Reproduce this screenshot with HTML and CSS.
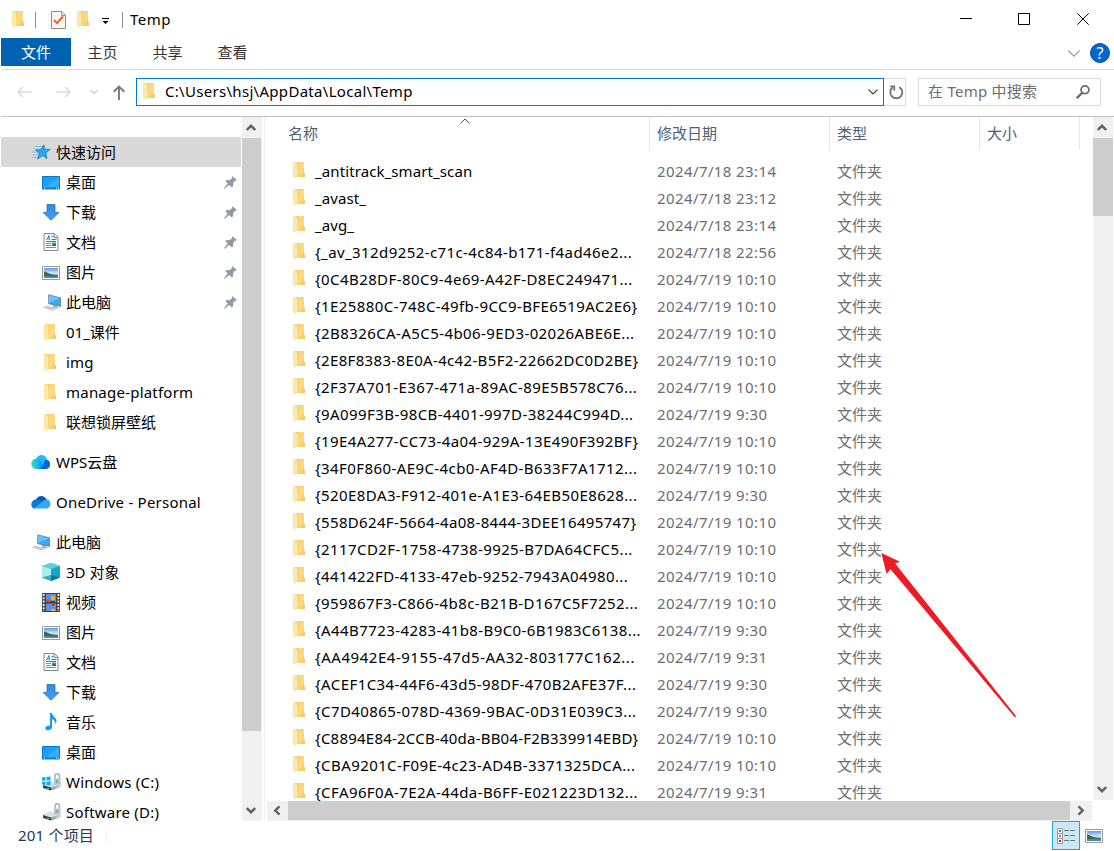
FILE: index.html
```html
<!DOCTYPE html>
<html lang="zh-CN">
<head>
  <meta charset="UTF-8">
  <meta name="viewport" content="width=device-width, initial-scale=1.0">
  <title>Temp</title>
  <link rel="stylesheet" href="styles.css">
</head>
<body>
  <!-- Shared icons -->
  <svg class="defs" width="0" height="0">
    <defs>
      <linearGradient id="gFolder" x1="0" y1="0" x2="1" y2="1"><stop offset="0" stop-color="#f3d074"/><stop offset=".6" stop-color="#fbdb82"/><stop offset="1" stop-color="#edc55c"/></linearGradient>
      <linearGradient id="gFlap" x1="0" y1="0" x2="1" y2="0"><stop offset="0" stop-color="#fde59d"/><stop offset="1" stop-color="#fdebb2"/></linearGradient>
      <linearGradient id="gSky" x1="0" y1="0" x2="0" y2="1"><stop offset="0" stop-color="#5b96e8"/><stop offset=".5" stop-color="#cfe6f8"/><stop offset="1" stop-color="#5d8a91"/></linearGradient>
      <linearGradient id="gBlue" x1="0" y1="0" x2="1" y2="1"><stop offset="0" stop-color="#1598f5"/><stop offset=".55" stop-color="#1ea5ff"/><stop offset=".56" stop-color="#42b2ff"/><stop offset="1" stop-color="#1ba0fb"/></linearGradient>
      <linearGradient id="gArrow" x1="0" y1="0" x2="0" y2="1"><stop offset="0" stop-color="#2f88dc"/><stop offset="1" stop-color="#45a3f0"/></linearGradient>
      <linearGradient id="gWps" x1="0" y1="0" x2="1" y2="0"><stop offset="0" stop-color="#35e0b5"/><stop offset=".5" stop-color="#16b4f4"/><stop offset="1" stop-color="#0c5be0"/></linearGradient>
      <linearGradient id="gDisk" x1="0" y1="0" x2="1" y2="0"><stop offset="0" stop-color="#8b9092"/><stop offset="1" stop-color="#d9dcdd"/></linearGradient>
    </defs>
    <symbol id="folder" viewBox="0 0 12 17">
      <path d="M1 0H11V11H12V15H3V2z" fill="url(#gFolder)"/>
      <path d="M0 0L4 2V14L3 17L0 15z" fill="url(#gFlap)"/>
    </symbol>
    <symbol id="star" viewBox="0 0 20 18">
      <path d="M4 3.500h7M2.500 6h5M1 9h7M2 11.800h5M1 14.500h6" stroke="#5fb4ea" stroke-width=".9" opacity=".8"/>
      <path d="M12.700 1.800l1.300 4.600 5.300-.1-4.600 3.800 1.300 5.500-4.500-2.900L6.600 16l1.700-5.700-3.500-3.200 5.200-.5z" fill="#2ba5f0" stroke="#1579c4" stroke-width=".8"/>
    </symbol>
    <symbol id="desktop" viewBox="0 0 18 14">
      <path d="M.5.5h17v12.500H.5z" fill="url(#gBlue)" stroke="#0b76c4"/>
      <path d="M1 11.500h16v1H1z" fill="#0870bd"/>
      <path d="M2 11.500h1v1H2zM14 11.500h1v1h-1zM16 11.500h1v1h-1z" fill="#fff"/>
    </symbol>
    <symbol id="download" viewBox="0 0 17 17">
      <path d="M4.500.5h8V8.500h4L8.500 16.200.7 8.500h3.800z" fill="url(#gArrow)" stroke="#2673bf" stroke-width=".8"/>
    </symbol>
    <symbol id="doc" viewBox="0 0 15 18">
      <path d="M.5.5h10.500L14.500 4v13.500H.5z" fill="#fcfdfd" stroke="#85898b"/>
      <path d="M10.500.5V4.500h4" fill="#e4e7e8" stroke="#85898b"/>
      <path d="M2.500 6.500h1L5.500 2.500v4h1M4 5h2M8 3.500h2M8 6.500h5M2.500 8.500h10" stroke="#1889d4" fill="none"/>
      <path d="M2.500 10.500h5M2.500 12.500h5M2.500 14.500h10" stroke="#7d9096"/>
      <path d="M8.500 9.500h4v3.500h-4z" fill="#3a95cc"/><path d="M9 12l2-1 1.500 1v1H9z" fill="#245f68"/>
    </symbol>
    <symbol id="picture" viewBox="0 0 18 14">
      <path d="M.5.5h17v13H.5z" fill="#fff" stroke="#9a9a9a"/>
      <path d="M2 2h14v10H2z" fill="url(#gSky)"/>
      <path d="M2 5.500c3 .5 5 2.500 9 3l5 .8v1.200H2z" fill="#3e6b50"/><path d="M2 10.500l14-.5v2H2z" fill="#4d87a5"/>
    </symbol>
    <symbol id="pc" viewBox="0 0 20 18">
      <path d="M10 10.500l5 2v1.500l2.500 1-3.500.8-5-1.500 2-.8z" fill="#acb7be"/>
      <path d="M6.200 1.200L19 4.500V14L6.200 11z" fill="#6d8aa0"/>
      <path d="M7 2.300l11 2.900v7.300L7 9.900z" fill="#37aaf5"/><path d="M7 2.300l11 2.900L7 9.900z" fill="#65c2ff"/>
      <path d="M0 14.300l4.500-1.800 10.500 3.300L10.500 18z" fill="#d3d9dd"/><path d="M2.500 14.200l8.500 2.600M4.500 13.300l8.500 2.700" stroke="#b5bdc2" stroke-width=".6"/>
    </symbol>
    <symbol id="wps" viewBox="0 0 20 16">
      <circle cx="10.500" cy="6.500" r="5.500" fill="#20baff"/>
      <path d="M5.500 4.500a5.200 5.200 0 0 0 0 10.500h9L8.500 6z" fill="url(#gWps)"/>
      <path d="M15 5.500a4.800 4.800 0 0 1 0 9.500H8.500c3 0 3.500-3 4.500-6.500.5-1.500 1-2.500 2-3z" fill="#0863e3"/>
    </symbol>
    <symbol id="onedrive" viewBox="0 0 21 14">
      <path d="M5 5C7-.5 14-1 16.500 4.500L12 9 4 5z" fill="#0a5bb0"/>
      <path d="M4.500 4.500c2.500-.8 4.500 0 6 1.200l4 2.800L3 13.800C-1 12.500-.5 5.500 4.500 4.500z" fill="#0d79d3"/>
      <path d="M11 7.500c2-3 5-3.500 6-3 4.500 1 4.500 8 0 9.300H3z" fill="#2eaaf0"/>
    </symbol>
    <symbol id="cube" viewBox="0 0 18 18">
      <path d="M9 0l9 3v11.500L9 18 0 14.500V3z" fill="#14a7cb"/>
      <path d="M9 0l9 3-9 3-9-3z" fill="#5ad0de"/><path d="M0 3l9 3v8L0 14.500z" fill="#b1ebeb"/>
      <path d="M0 14.500L9 12v6z" fill="#2bb3c6"/><path d="M9 12l9 2.500L9 18z" fill="#087a8c"/>
    </symbol>
    <symbol id="video" viewBox="0 0 18 19">
      <path d="M0 0h18v19H0z" fill="#424242"/>
      <path d="M1.700 1v17M16.300 1v17" stroke="#f5f5f5" stroke-width="1.700" stroke-dasharray="2 1.300"/>
      <path d="M4 1h10v8H4zM4 10.500h10V18H4z" fill="#5a91e6"/>
      <path d="M4 6l5 1v2H4z" fill="#d94b44"/><path d="M9 3h4v4H9z" fill="#e8b21c"/><path d="M8 8h5v2l-2 3-2-3z" fill="#26523c"/><path d="M10 10h3v2h-3z" fill="#d93025"/><path d="M9 16h4v2H9z" fill="#f2bd23"/>
    </symbol>
    <symbol id="music" viewBox="0 0 12 18">
      <path d="M5 0h2c0 3.500 5 4.500 4.500 8.500L10 11.500c.5-2.500-.5-4.500-3-5.500v8.500c-.5 3-6 4-6.800 1C0 13.500 3 12 5 12.500z" fill="#129cf5"/>
    </symbol>
    <symbol id="drive" viewBox="0 0 20 18">
      <path d="M1 12l7-4 11 3-7 5z" fill="#dde1e3"/>
      <path d="M1 12l8 2.500v3L1 15z" fill="#3b4340"/><path d="M9 14.500L19 11v3l-10 3.500z" fill="url(#gDisk)"/>
      <path d="M5 14.500l2 .6v1.200l-2-.6z" fill="#31df4b"/>
      <path d="M13 6V3c0-3 4.500-3 4.500 0v2" fill="none" stroke="#a2b2bc" stroke-width="1.500"/>
      <path d="M12 6l6.500-1v6L12 12z" fill="#b2c4cf"/><path d="M15 7v3" stroke="#738692"/>
    </symbol>
    <symbol id="windrive" viewBox="0 0 20 18">
      <use href="#drive" width="20" height="18"/>
      <path d="M0 4.500L3.500 4v3.500H0zM4.500 4L8.500 3.500v4h-4zM0 8.500h3.500V12L0 11.500zM4.500 8.500h4v4L4.500 12z" fill="#08b2ee"/>
    </symbol>
    <symbol id="pin" viewBox="0 0 13 13">
      <path d="M8.300.2l4.500 3.600-1.200 1.200-.9-.2-1.800 3 .3 2.300-1.300 1.300-2.700-2.400L.8 12.800 0 12.200l3.700-4.800L1.200 5.100l1.500-1.200 2.800.3 2.800-2.300-.6-.8z" fill="#8f9aa3"/>
    </symbol>
    <symbol id="chev" viewBox="0 0 10 7"><path d="M.8 6L5 1.800 9.200 6" fill="none" stroke="#606060" stroke-width="2.400"/></symbol>
  </svg>

  <div class="window">
    <header class="titlebar">
      <svg class="folder-lg"><use href="#folder"/></svg>
      <span class="bar"></span>
      <svg class="check" viewBox="0 0 15 18"><path d="M.5.5h10.500l3.500 3.500v13.500H.5z" fill="#f6f6f6" stroke="#8b8b8b"/><path d="M10.500.5V4.500h4" fill="#ddd" stroke="#999"/><path d="M3 9l3 3.200L12 5.500" fill="none" stroke="#f15a22" stroke-width="1.900"/></svg>
      <svg class="folder-lg second"><use href="#folder"/></svg>
      <svg class="qat" viewBox="0 0 7 6"><path d="M0 .5h7" stroke="#000"/><path d="M.5 3h6L3.500 6z" fill="#000"/></svg>
      <span class="bar bar2"></span>
      <span class="title">Temp</span>
      <div class="controls">
        <svg viewBox="0 0 12 12"><path d="M0 5.500h12" stroke="#000"/></svg>
        <svg viewBox="0 0 12 12"><path d="M.5.5h11v11H.5z" fill="none" stroke="#000"/></svg>
        <svg viewBox="0 0 12 12"><path d="M.3.3l11.400 11.400M11.700.3L.3 11.700" stroke="#000"/></svg>
      </div>
    </header>

    <nav class="ribbon">
      <a class="active">文件</a>
      <a>主页</a>
      <a>共享</a>
      <a>查看</a>
      <svg class="expand" viewBox="0 0 12 7"><path d="M.3.5L6 6.200 11.700.5" fill="none" stroke="#999" stroke-width="1.100"/></svg>
      <span class="help">?</span>
    </nav>

    <div class="navbar">
      <svg class="back" viewBox="0 0 15 12"><path d="M15 6H1M6 .8L1 6l5 5.200" fill="none" stroke="#dadada" stroke-width="1.500"/></svg>
      <svg class="forward" viewBox="0 0 15 12"><path d="M0 6h14M9 .8L14 6l-5 5.200" fill="none" stroke="#dadada" stroke-width="1.500"/></svg>
      <svg class="recent" viewBox="0 0 8 6"><path d="M.5 1L4 4.500 7.500 1" fill="none" stroke="#d0d0d0" stroke-width="1.500"/></svg>
      <svg class="up" viewBox="0 0 12 15"><path d="M6 15V1.500M.7 6.700L6 1.500l5.300 5.200" fill="none" stroke="#787878" stroke-width="1.900"/></svg>
      <div class="address">
        <svg class="folder"><use href="#folder"/></svg>
        <span>C:\Users\hsj\AppData\Local\Temp</span>
        <svg class="drop" viewBox="0 0 10 6"><path d="M.5.5L5 5 9.500.5" fill="none" stroke="#444" stroke-width="1.100"/></svg>
      </div>
      <div class="refresh"><svg viewBox="0 0 15 15"><path d="M10.300 2.100A6 6 0 1 1 4 2.300" fill="none" stroke="#777" stroke-width="1.900"/><path d="M1.200 1.300H5.300V5.800" fill="none" stroke="#777" stroke-width="1.700"/></svg></div>
      <div class="search">
        <span>在 Temp 中搜索</span>
        <svg viewBox="0 0 14 14"><circle cx="9" cy="4.800" r="3.900" fill="none" stroke="#6a6a6a" stroke-width="1.800"/><path d="M6.200 7.800L.8 13.200" stroke="#6a6a6a" stroke-width="2.300"/></svg>
      </div>
    </div>

    <main>
      <aside>
        <ul class="tree">
          <li class="root selected"><svg><use href="#star"/></svg>快速访问</li>
          <li><svg class="flat"><use href="#desktop"/></svg>桌面<svg class="pin"><use href="#pin"/></svg></li>
          <li><svg class="down"><use href="#download"/></svg>下载<svg class="pin"><use href="#pin"/></svg></li>
          <li><svg><use href="#doc"/></svg>文档<svg class="pin"><use href="#pin"/></svg></li>
          <li><svg class="flat"><use href="#picture"/></svg>图片<svg class="pin"><use href="#pin"/></svg></li>
          <li><svg class="wide"><use href="#pc"/></svg>此电脑<svg class="pin"><use href="#pin"/></svg></li>
          <li><svg class="folder"><use href="#folder"/></svg>01_课件</li>
          <li><svg class="folder"><use href="#folder"/></svg><span class="en">img</span></li>
          <li><svg class="folder"><use href="#folder"/></svg><span class="en">manage-platform</span></li>
          <li><svg class="folder"><use href="#folder"/></svg>联想锁屏壁纸</li>
          <li class="root"><svg class="cloud"><use href="#wps"/></svg>WPS云盘</li>
          <li class="root"><svg class="onedrive"><use href="#onedrive"/></svg><span class="en">OneDrive - Personal</span></li>
          <li class="root"><svg><use href="#pc"/></svg>此电脑</li>
          <li><svg><use href="#cube"/></svg>3D 对象</li>
          <li><svg class="film"><use href="#video"/></svg>视频</li>
          <li><svg class="flat"><use href="#picture"/></svg>图片</li>
          <li><svg><use href="#doc"/></svg>文档</li>
          <li><svg class="down"><use href="#download"/></svg>下载</li>
          <li><svg><use href="#music"/></svg>音乐</li>
          <li><svg class="flat"><use href="#desktop"/></svg>桌面</li>
          <li><svg class="wide"><use href="#windrive"/></svg><span class="en">Windows (C:)</span></li>
          <li><svg class="wide"><use href="#drive"/></svg><span class="en">Software (D:)</span></li>
        </ul>
        <div class="scroll vertical">
          <svg class="btn"><use href="#chev"/></svg>
          <div class="thumb"></div>
          <svg class="btn end"><use href="#chev"/></svg>
        </div>
      </aside>

      <section class="files">
        <div class="content">
          <div class="row head"><span>名称<svg class="sort" viewBox="0 0 10 6"><path d="M.5 5.500L5 1l4.500 4.500" fill="none" stroke="#555"/></svg></span><span>修改日期</span><span>类型</span><span>大小</span></div>
          <div class="list">
            <div class="row"><span><svg class="folder"><use href="#folder"/></svg><b class="plain">_antitrack_smart_scan</b></span><i>2024/7/18 23:14</i><em>文件夹</em></div>
            <div class="row"><span><svg class="folder"><use href="#folder"/></svg><b class="plain">_avast_</b></span><i>2024/7/18 23:12</i><em>文件夹</em></div>
            <div class="row"><span><svg class="folder"><use href="#folder"/></svg><b class="plain">_avg_</b></span><i>2024/7/18 23:14</i><em>文件夹</em></div>
            <div class="row"><span><svg class="folder"><use href="#folder"/></svg><b>{_av_312d9252-c71c-4c84-b171-f4ad46e2...</b></span><i>2024/7/18 22:56</i><em>文件夹</em></div>
            <div class="row"><span><svg class="folder"><use href="#folder"/></svg><b>{0C4B28DF-80C9-4e69-A42F-D8EC249471...</b></span><i>2024/7/19 10:10</i><em>文件夹</em></div>
            <div class="row"><span><svg class="folder"><use href="#folder"/></svg><b>{1E25880C-748C-49fb-9CC9-BFE6519AC2E6}</b></span><i>2024/7/19 10:10</i><em>文件夹</em></div>
            <div class="row"><span><svg class="folder"><use href="#folder"/></svg><b>{2B8326CA-A5C5-4b06-9ED3-02026ABE6E...</b></span><i>2024/7/19 10:10</i><em>文件夹</em></div>
            <div class="row"><span><svg class="folder"><use href="#folder"/></svg><b class="full">{2E8F8383-8E0A-4c42-B5F2-22662DC0D2BE}</b></span><i>2024/7/19 10:10</i><em>文件夹</em></div>
            <div class="row"><span><svg class="folder"><use href="#folder"/></svg><b>{2F37A701-E367-471a-89AC-89E5B578C76...</b></span><i>2024/7/19 10:10</i><em>文件夹</em></div>
            <div class="row"><span><svg class="folder"><use href="#folder"/></svg><b>{9A099F3B-98CB-4401-997D-38244C994D...</b></span><i>2024/7/19 9:30</i><em>文件夹</em></div>
            <div class="row"><span><svg class="folder"><use href="#folder"/></svg><b>{19E4A277-CC73-4a04-929A-13E490F392BF}</b></span><i>2024/7/19 10:10</i><em>文件夹</em></div>
            <div class="row"><span><svg class="folder"><use href="#folder"/></svg><b>{34F0F860-AE9C-4cb0-AF4D-B633F7A1712...</b></span><i>2024/7/19 10:10</i><em>文件夹</em></div>
            <div class="row"><span><svg class="folder"><use href="#folder"/></svg><b>{520E8DA3-F912-401e-A1E3-64EB50E8628...</b></span><i>2024/7/19 9:30</i><em>文件夹</em></div>
            <div class="row"><span><svg class="folder"><use href="#folder"/></svg><b class="full">{558D624F-5664-4a08-8444-3DEE16495747}</b></span><i>2024/7/19 10:10</i><em>文件夹</em></div>
            <div class="row"><span><svg class="folder"><use href="#folder"/></svg><b>{2117CD2F-1758-4738-9925-B7DA64CFC5...</b></span><i>2024/7/19 10:10</i><em>文件夹</em></div>
            <div class="row"><span><svg class="folder"><use href="#folder"/></svg><b>{441422FD-4133-47eb-9252-7943A04980...</b></span><i>2024/7/19 10:10</i><em>文件夹</em></div>
            <div class="row"><span><svg class="folder"><use href="#folder"/></svg><b>{959867F3-C866-4b8c-B21B-D167C5F7252...</b></span><i>2024/7/19 10:10</i><em>文件夹</em></div>
            <div class="row"><span><svg class="folder"><use href="#folder"/></svg><b>{A44B7723-4283-41b8-B9C0-6B1983C6138...</b></span><i>2024/7/19 9:30</i><em>文件夹</em></div>
            <div class="row"><span><svg class="folder"><use href="#folder"/></svg><b class="loose">{AA4942E4-9155-47d5-AA32-803177C162...</b></span><i>2024/7/19 9:31</i><em>文件夹</em></div>
            <div class="row"><span><svg class="folder"><use href="#folder"/></svg><b>{ACEF1C34-44F6-43d5-98DF-470B2AFE37F...</b></span><i>2024/7/19 9:30</i><em>文件夹</em></div>
            <div class="row"><span><svg class="folder"><use href="#folder"/></svg><b>{C7D40865-078D-4369-9BAC-0D31E039C3...</b></span><i>2024/7/19 9:30</i><em>文件夹</em></div>
            <div class="row"><span><svg class="folder"><use href="#folder"/></svg><b class="tight">{C8894E84-2CCB-40da-BB04-F2B339914EBD}</b></span><i>2024/7/19 10:10</i><em>文件夹</em></div>
            <div class="row"><span><svg class="folder"><use href="#folder"/></svg><b>{CBA9201C-F09E-4c23-AD4B-3371325DCA...</b></span><i>2024/7/19 10:10</i><em>文件夹</em></div>
            <div class="row"><span><svg class="folder"><use href="#folder"/></svg><b>{CFA96F0A-7E2A-44da-B6FF-E021223D132...</b></span><i>2024/7/19 9:31</i><em>文件夹</em></div>
          </div>
          <div class="scroll horizontal">
            <svg class="btn left"><use href="#chev"/></svg>
            <div class="thumb"></div>
            <svg class="btn right"><use href="#chev"/></svg>
          </div>
        </div>
        <div class="scroll vertical">
          <svg class="btn"><use href="#chev"/></svg>
          <div class="thumb"></div>
          <svg class="btn end"><use href="#chev"/></svg>
        </div>
      </section>
    </main>

    <footer>
      <span class="count">201 个项目</span>
      <div class="view on"><svg class="details" viewBox="0 0 18 16"><path d="M.5.5h5v15h-5zM.5 5.500h5M.5 10.500h5" fill="#fff" stroke="#999"/><path d="M2 2h2v2H2z" fill="#3f77a8"/><path d="M2 7h2v2H2z" fill="#bd6b3c"/><path d="M2 12h2v2H2z" fill="#d32222"/><path d="M7 2.500h5M13 2.500h5M7 7.500h5M13 7.500h5M7 12.500h5M13 12.500h5" stroke="#777"/></svg></div>
      <div class="view"><svg class="flat"><use href="#picture"/></svg></div>
    </footer>

    <svg class="pointer" viewBox="0 0 136 165"><path d="M.3 0L19 8.700 14.200 10.500 135.200 163.200 133.800 164.300 9.500 16.200 5.500 20.700z" fill="#ed1c24"/></svg>
  </div>
</body>
</html>
```

FILE: styles.css
```css
* {
  box-sizing: border-box;
}
body {
  margin: 0;
  background: #fff;
  color: #000;
  font-family: "Noto Sans", "Noto Sans CJK SC", sans-serif;
  font-size: 15px;
  line-height: 20px;
}
svg {
  display: block;
  flex: none;
}
.defs {
  position: absolute;
}
.window {
  position: relative;
  width: 1114px;
  height: 851px;
  padding-left: 1px;
  display: flex;
  flex-direction: column;
  overflow: hidden;
}
.folder {
  width: 12px;
  height: 17px;
}
/* Title bar */
.titlebar {
  height: 38px;
  display: flex;
  align-items: center;
  padding-left: 11px;
}
.folder-lg {
  width: 12px;
  height: 17px;
}
.bar {
  width: 1px;
  height: 16px;
  margin: 2px 15px 0 11px;
  background: #8c8c8c;
}
.check {
  width: 15px;
  height: 18px;
  margin-top: 2px;
}
.second {
  margin: 1px 0 0 11px;
}
.qat {
  width: 7px;
  height: 6px;
  margin: 4px 0 0 13px;
}
.bar2 {
  margin: 2px 7px 0 13px;
}
.title {
  letter-spacing: 0.5px;
}
.controls {
  margin-left: auto;
  margin-right: 25px;
  display: flex;
  gap: 46px;
}
.controls svg {
  width: 12px;
  height: 12px;
}
.controls svg:first-child,
.controls svg:nth-child(2) {
  margin-left: -1px;
  margin-right: 1px;
}
/* Ribbon tabs */
.ribbon {
  height: 32px;
  display: flex;
  align-items: flex-start;
  border-bottom: 1px solid #dadbdc;
}
.ribbon a {
  width: 65px;
  height: 28px;
  line-height: 29px;
  text-align: center;
  color: #333;
}
.ribbon .active {
  width: 70px;
  margin-right: -1px;
  background: #0063b1;
  color: #fff;
}
.expand {
  width: 12px;
  height: 7px;
  margin: 12px 10px 0 auto;
}
.help {
  width: 20px;
  height: 20px;
  margin: 5px 4px 0 0;
  border: 1px solid #0a5299;
  border-radius: 50%;
  background: #0067cf;
  color: #fff;
  font-size: 16px;
  line-height: 18px;
  text-align: center;
}
/* Address bar */
.navbar {
  height: 47px;
  display: flex;
  align-items: center;
  padding: 0 13px 3px 16px;
  border-bottom: 1px solid #bfbfbf;
}
.back,
.forward {
  width: 15px;
  height: 12px;
}
.forward {
  margin-left: 24px;
}
.recent {
  width: 8px;
  height: 6px;
  margin-left: 19px;
}
.up {
  width: 12px;
  height: 15px;
  margin: 2px 11px 0 15px;
}
.address {
  width: 748px;
  height: 28px;
  display: flex;
  align-items: center;
  padding: 0 5px 0 6px;
  border: 1px solid #0078d7;
}
.address span {
  margin: 0 0 2px 10px;
  letter-spacing: 0.3px;
}
.drop {
  width: 10px;
  height: 6px;
  margin-left: auto;
}
.refresh {
  width: 22px;
  height: 28px;
  padding: 6px 0 0 5px;
  border: 1px solid #d9d9d9;
  border-left: 0;
}
.refresh svg {
  width: 15px;
  height: 15px;
}
.search {
  width: 183px;
  height: 28px;
  display: flex;
  align-items: center;
  margin-left: 12px;
  padding: 0 10px 0 9px;
  border: 1px solid #d9d9d9;
  color: #6d6d6d;
}
.search span {
  margin-bottom: 2px;
  letter-spacing: 0.25px;
}
.search svg {
  width: 14px;
  height: 14px;
  margin-left: auto;
}
/* Main area */
main {
  height: 704px;
  display: flex;
}
aside {
  width: 264px;
  display: flex;
  border-right: 1px solid #f0f0f0;
}
.tree {
  width: 241px;
  margin: 0;
  padding: 20px 1px 0 0;
  list-style: none;
  overflow: hidden;
}
.tree li {
  height: 30px;
  display: flex;
  align-items: center;
  padding: 0 4px 0 41px;
  white-space: nowrap;
}
.tree li > svg:first-child {
  width: 18px;
  height: 18px;
  margin-right: 6px;
}
.tree li > svg.flat {
  height: 14px;
  margin-top: 1px;
}
.tree li > svg.down {
  height: 17px;
}
.tree li > svg.film {
  height: 19px;
}
.tree li > svg.folder {
  width: 12px;
  height: 17px;
  margin: 0 10px 0 2px;
}
.tree li > svg.wide {
  width: 20px;
  margin: 0 4px 0 0;
}
.tree .root {
  margin-top: 10px;
  padding-left: 30px;
}
.tree .root > svg:first-child {
  width: 20px;
  margin-right: 5px;
}
.tree .root > svg.cloud {
  height: 16px;
}
.tree .root > svg.onedrive {
  height: 14px;
}
.tree .selected {
  margin-top: 0;
  background: #d9d9d9;
}
.tree .pin {
  width: 13px;
  height: 13px;
  margin-left: auto;
}
.en {
  letter-spacing: 0.22px;
}
/* Scrollbars */
.scroll {
  background: #f0f0f0;
  display: flex;
}
.vertical {
  width: 20px;
  flex-direction: column;
}
.btn {
  width: 10px;
  height: 7px;
  margin: 7px 5px 7px 4px;
}
.thumb {
  background: #cdcdcd;
}
.vertical .thumb {
  width: 19px;
  height: 593px;
}
.end {
  margin-top: auto;
  transform: rotate(180deg);
}
.horizontal {
  width: 825px;
  height: 20px;
  margin-left: 2px;
}
.horizontal .thumb {
  width: 782px;
  height: 19px;
}
.horizontal .btn {
  margin: 6px 6px 0 5px;
  transform: rotate(-90deg);
}
.horizontal .right {
  margin-left: 6px;
  transform: rotate(90deg);
}
/* File list */
.files {
  display: flex;
  flex: 1;
}
.content {
  width: 828px;
}
.files > .vertical {
  height: 683px;
}
.files > .vertical .thumb {
  width: 20px;
  height: 78px;
}
.row {
  height: 27px;
  display: grid;
  grid-template-columns: 385px 180px 150px 100px;
  align-items: center;
  white-space: nowrap;
}
.head {
  height: 33px;
  color: #4c607a;
}
.head > span {
  height: 33px;
  line-height: 32px;
  padding-left: 7px;
  border-right: 1px solid #e5e5e5;
}
.head > span:first-child {
  position: relative;
  padding-left: 23px;
}
.sort {
  position: absolute;
  left: 195px;
  top: 1px;
  width: 10px;
  height: 6px;
}
.list {
  height: 651px;
  padding-top: 7px;
  line-height: 18px;
  overflow: hidden;
}
.list span {
  display: flex;
  align-items: center;
  padding-left: 28px;
}
.list .folder {
  margin: 0 10px 1px 0;
}
.list b {
  font-weight: normal;
  letter-spacing: 0.41px;
}
.list .plain {
  letter-spacing: 0.1px;
}
.list .full {
  letter-spacing: 0.34px;
}
.list .loose {
  letter-spacing: 0.53px;
}
.list .tight {
  letter-spacing: 0.22px;
}
.list i,
.list em {
  padding-left: 7px;
  font-style: normal;
  color: #6d6d6d;
}
.list i {
  letter-spacing: 0.4px;
}
/* Status bar */
footer {
  height: 30px;
  display: flex;
  align-items: flex-start;
  padding: 0 6px 0 17px;
  color: #1e395b;
}
.count {
  height: 13px;
  margin: 8px auto 0 0;
  padding-right: 12px;
  line-height: 13px;
  letter-spacing: 0.2px;
  border-right: 1px solid #f0f0f0;
}
.view {
  width: 28px;
  height: 29px;
  display: flex;
  align-items: center;
  justify-content: center;
}
.on {
  border: 1px solid #2a9fdc;
  background: #cbe8f6;
}
.view svg {
  width: 18px;
  height: 14px;
}
.view .details {
  height: 16px;
}
/* Red arrow */
.pointer {
  position: absolute;
  left: 881px;
  top: 553px;
  width: 136px;
  height: 165px;
}
```
